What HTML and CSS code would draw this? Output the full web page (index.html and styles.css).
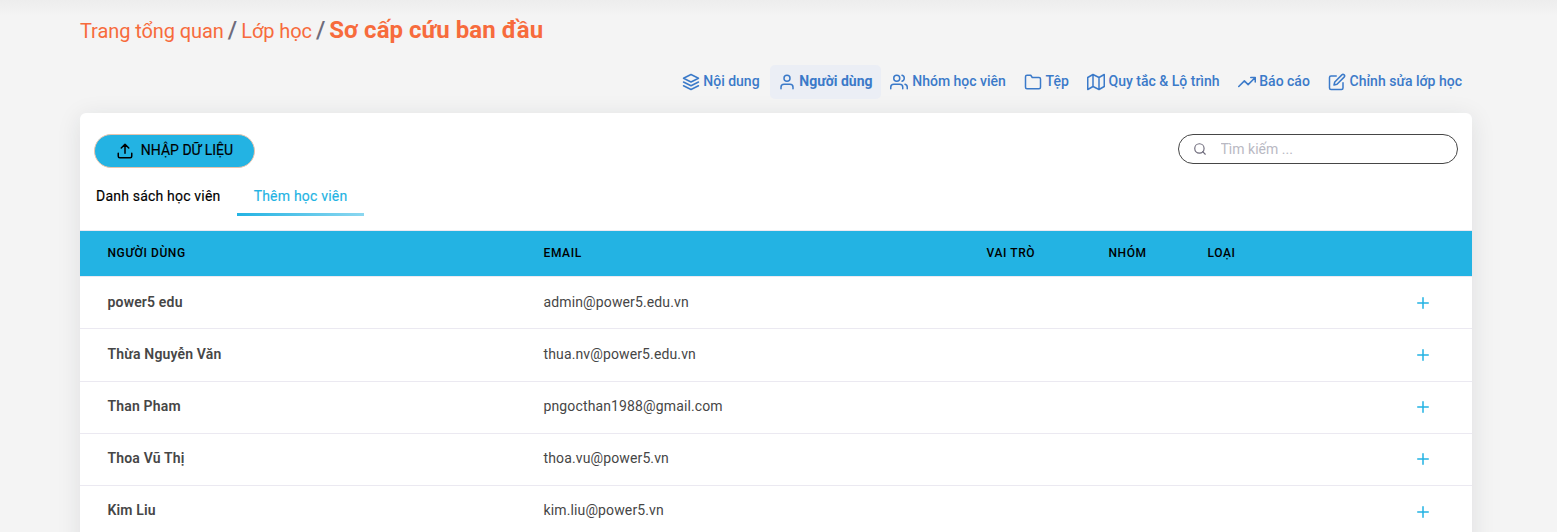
FILE: index.html
```html
<!DOCTYPE html>
<html lang="vi">
<head>
<meta charset="utf-8">
<title>Sơ cấp cứu ban đầu</title>
<link rel="stylesheet" href="styles.css">
</head>
<body>
<main class="page">
  <nav class="crumbs"><a>Trang tổng quan</a><b>/</b><a>Lớp học</a><b>/</b><strong>Sơ cấp cứu ban đầu</strong></nav>
  <nav class="menu">
    <a class="item"><svg viewBox="0 0 24 24"><path d="M12 2 2 7l10 5 10-5-10-5zM2 17l10 5 10-5M2 12l10 5 10-5"/></svg><span>Nội dung</span></a>
    <a class="item active"><svg viewBox="0 0 24 24"><path d="M20 21v-2a4 4 0 0 0-4-4H8a4 4 0 0 0-4 4v2"/><circle cx="12" cy="7" r="4"/></svg><span>Người dùng</span></a>
    <a class="item groups"><svg viewBox="0 0 24 24"><path d="M17 21v-2a4 4 0 0 0-4-4H5a4 4 0 0 0-4 4v2M23 21v-2a4 4 0 0 0-3-3.87M16 3.13a4 4 0 0 1 0 7.75"/><circle cx="9" cy="7" r="4"/></svg><span>Nhóm học viên</span></a>
    <a class="item"><svg viewBox="0 0 24 24"><path d="M22 19a2 2 0 0 1-2 2H4a2 2 0 0 1-2-2V5a2 2 0 0 1 2-2h5l2 3h9a2 2 0 0 1 2 2z"/></svg><span>Tệp</span></a>
    <a class="item"><svg viewBox="0 0 24 24"><path d="M1 6v16l7-4 8 4 7-4V2l-7 4-8-4-7 4zM8 2v16M16 6v16"/></svg><span>Quy tắc &amp; Lộ trình</span></a>
    <a class="item"><svg viewBox="0 0 24 24"><path d="M23 6l-9.500 9.500-5-5L1 18M17 6h6v6"/></svg><span>Báo cáo</span></a>
    <a class="item"><svg viewBox="0 0 24 24"><path d="M11 4H4a2 2 0 0 0-2 2v14a2 2 0 0 0 2 2h14a2 2 0 0 0 2-2v-7"/><path d="M18.500 2.500a2.121 2.121 0 0 1 3 3L12 15l-4 1 1-4 9.500-9.500z"/></svg><span>Chỉnh sửa lớp học</span></a>
  </nav>
  <section class="card">
    <div class="toolbar">
      <button class="import"><svg viewBox="0 0 24 24"><path d="M21 15v4a2 2 0 0 1-2 2H5a2 2 0 0 1-2-2v-4M17 8l-5-5-5 5M12 3v12"/></svg><span>NHẬP DỮ LIỆU</span></button>
      <label class="search"><svg viewBox="0 0 24 24"><circle cx="11" cy="11" r="8"/><path d="M21 21l-4.350-4.350"/></svg><input placeholder="Tìm kiếm ..."></label>
    </div>
    <div class="tabs"><a class="tab">Danh sách học viên</a><a class="tab on">Thêm học viên</a></div>
    <div class="row head"><span>NGƯỜI DÙNG</span><span>EMAIL</span><span>VAI TRÒ</span><span>NHÓM</span><span>LOẠI</span></div>
    <div class="row"><b>power5 edu</b><span>admin@power5.edu.vn</span><svg class="plus" viewBox="0 0 24 24"><path d="M12 5v14M5 12h14"/></svg></div>
    <div class="row tall"><b>Thừa Nguyễn Văn</b><span>thua.nv@power5.edu.vn</span><svg class="plus" viewBox="0 0 24 24"><path d="M12 5v14M5 12h14"/></svg></div>
    <div class="row low"><b>Than Pham</b><span>pngocthan1988@gmail.com</span><svg class="plus" viewBox="0 0 24 24"><path d="M12 5v14M5 12h14"/></svg></div>
    <div class="row low"><b>Thoa Vũ Thị</b><span>thoa.vu@power5.vn</span><svg class="plus" viewBox="0 0 24 24"><path d="M12 5v14M5 12h14"/></svg></div>
    <div class="row last"><b>Kim Liu</b><span>kim.liu@power5.vn</span><svg class="plus" viewBox="0 0 24 24"><path d="M12 5v14M5 12h14"/></svg></div>
  </section>
</main>
</body>
</html>
```
FILE: styles.css
```css
* { box-sizing: border-box; }
body { margin: 0; height: 532px; overflow: hidden; background: #f4f4f4; font-family: Roboto, sans-serif; font-size: 14px; color: #464646; }
svg { fill: none; stroke: currentColor; stroke-width: 2; stroke-linecap: round; stroke-linejoin: round; flex: none; }
.page { height: 532px; padding: 0 86px 0 80px; background: linear-gradient(#ededed, #f4f4f4 16px); }
.crumbs { height: 65px; padding-top: 15px; display: flex; align-items: baseline; gap: 4px; font-size: 20px; line-height: 30px; color: #f76b3c; white-space: nowrap; }
.crumbs a { letter-spacing: -.08px; }
.crumbs b { color: #6e6b7b; font-size: 24px; font-weight: 500; }
.crumbs strong { font-size: 24px; font-weight: 700; letter-spacing: .04px; }
.menu { height: 48px; display: flex; justify-content: flex-end; align-items: flex-start; }
.item { height: 34px; display: flex; align-items: center; gap: 3.7px; padding: 0 9px; font-weight: 500; color: #3b7ac9; white-space: nowrap; }
.item span { padding-bottom: 2px; }
.item svg { width: 18px; height: 18px; }
.item.active { margin: 0 1px; padding: 0 8px; background: #ebeef5; border-radius: 5px; font-weight: 700; }
.item.groups { gap: 4.7px; padding-left: 8px; }
.card { width: 1392px; height: 440px; background: #fff; border-radius: 6px 6px 0 0; box-shadow: 0 4px 24px rgba(34,41,47,.1); }
.toolbar { display: flex; justify-content: space-between; align-items: flex-start; padding: 21px 14px 0; height: 65px; }
.import { width: 161px; height: 34px; display: flex; align-items: center; justify-content: center; gap: 7px; padding: 0; border: 1px solid #e8c4ad; border-radius: 17px; background: #23b3e3; color: #000; font: 400 14px Roboto, sans-serif; -webkit-text-stroke: .15px; }
.import span { padding-bottom: 2px; }
.import svg { width: 18px; height: 18px; }
.search { width: 280px; height: 30px; display: flex; align-items: center; border: 1px solid #464646; border-radius: 15px; padding-left: 14px; gap: 13.5px; color: #6e6b7b; }
.search svg { width: 14px; height: 14px; }
.search input { width: 200px; border: 0; padding: 0; outline: 0; background: none; font: 14px Roboto, sans-serif; }
.search input::placeholder { color: #b9b9c3; }
.tabs { display: flex; height: 52px; }
.tab { height: 38px; line-height: 37px; padding: 0 16px; font-weight: 400; letter-spacing: .2px; color: #000; white-space: nowrap; -webkit-text-stroke: .15px; }
.tab:first-child { width: 157px; }
.tab.on { color: #23b3e3; width: 127px; padding: 0; text-align: center; background: linear-gradient(90deg, #23b3e3, #8bd7f0) bottom / 100% 3px no-repeat; }
.row { display: grid; grid-template-columns: 436px 443px 122px 99px 1fr; align-items: center; height: 52px; padding: 0 0 0 27.5px; border-bottom: 1px solid #ebe9f1; letter-spacing: .13px; }
.row b { font-weight: 600; letter-spacing: .17px; }
.row b, .row span { padding-bottom: 2px; }
.row.tall, .row.last { height: 53px; }
.row.tall b, .row.tall span { padding-bottom: 3px; }
.row.low b, .row.low span { padding-bottom: 4px; }
.row.last b, .row.last span { padding-bottom: 5px; }
.row.tall .plus { margin-bottom: 1px; }
.row.low .plus { margin-bottom: 2px; }
.row.head { height: 47px; background: #23b3e3; border-top: 1px solid #ebe9f1; color: #000; font-size: 12px; font-weight: 500; letter-spacing: .6px; }
.row.head span { padding-bottom: 2px; }
.plus { grid-column: 5; width: 18px; height: 18px; margin-left: 206.500px; color: #23b3e3; }
```
